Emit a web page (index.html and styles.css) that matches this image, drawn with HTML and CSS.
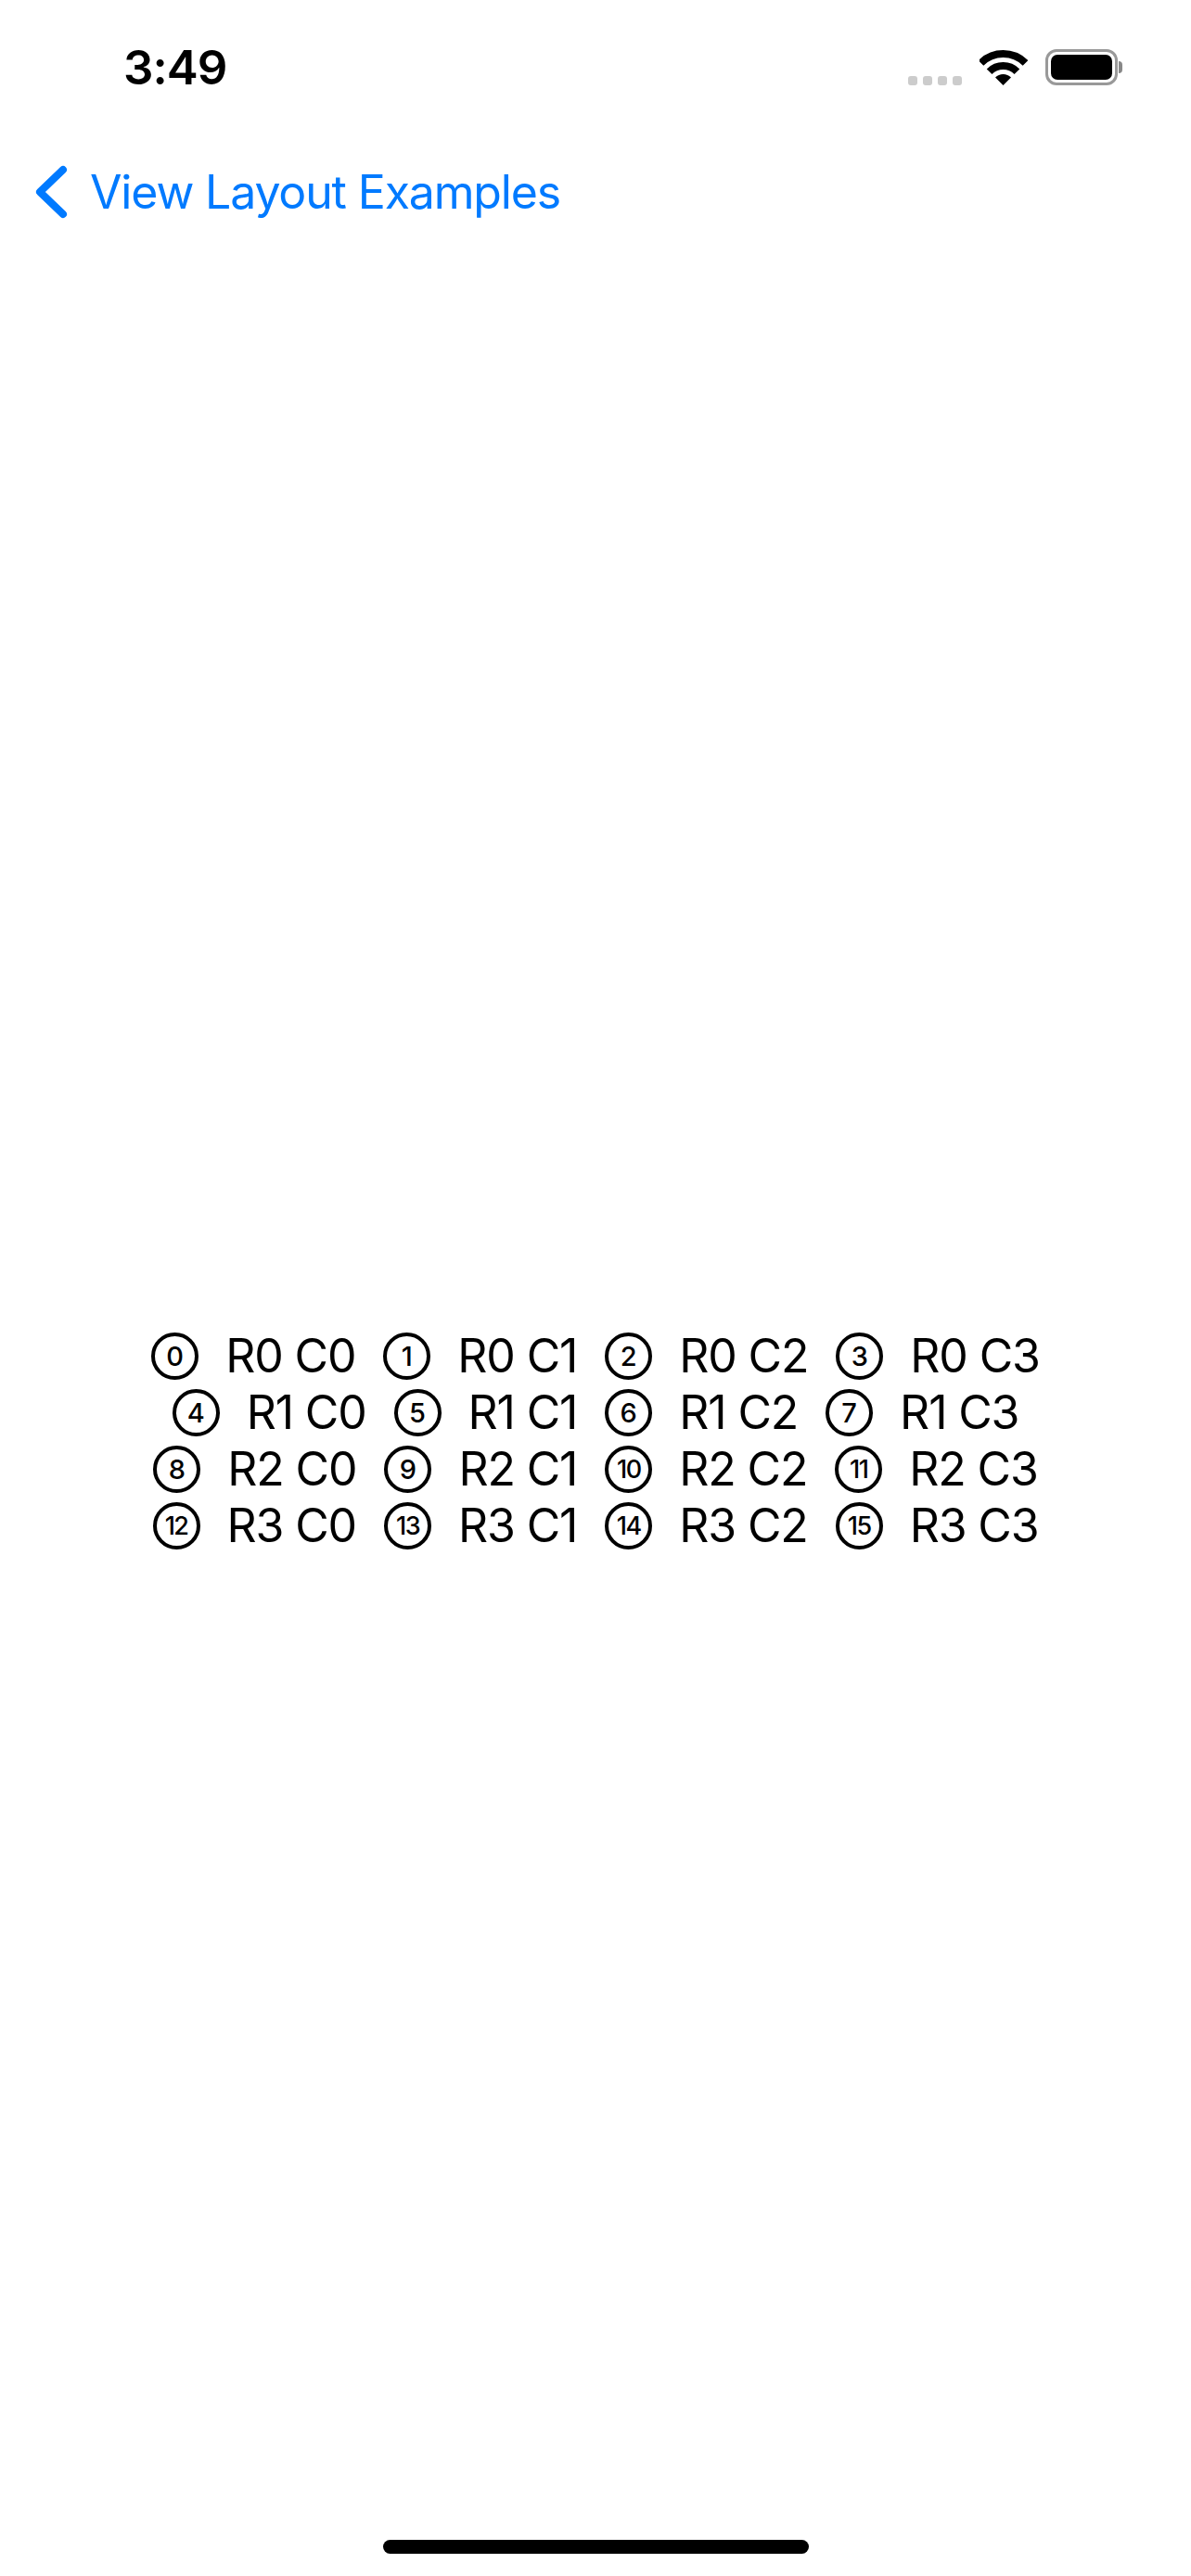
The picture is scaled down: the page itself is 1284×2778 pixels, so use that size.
FILE: index.html
```html
<!DOCTYPE html>
<html lang="en">
<head>
    <meta charset="UTF-8">
    <meta name="viewport" content="width=device-width, initial-scale=1.0">
    <title>Grid Layout</title>
    <link rel="stylesheet" href="styles.css">
</head>
<body>
    <!-- Status bar -->
    <header class="status-bar">
        <span class="time">3:49</span>
        <div class="status-icons">
            <div class="signal-dots"><i></i><i></i><i></i><i></i></div>
            <svg class="wifi" viewBox="0 0 52 38" width="52" height="38">
                <path d="M1.5 14 A34 34 0 0 1 49.5 14" fill="none" stroke="#000" stroke-width="8"/>
                <path d="M10.6 23.2 A21 21 0 0 1 40.4 23.2" fill="none" stroke="#000" stroke-width="8"/>
                <path d="M25.5 38 L17 29.5 A12 12 0 0 1 34 29.5 Z" fill="#000"/>
            </svg>
            <div class="battery"><div class="battery-level"></div></div>
        </div>
    </header>

    <nav class="nav-bar">
        <svg class="chevron" viewBox="0 0 36 60" width="36" height="60">
            <path d="M31 6 L6 30 L31 54" fill="none" stroke="#007aff" stroke-width="8" stroke-linecap="round" stroke-linejoin="round"/>
        </svg>
        <span class="back-label">View Layout Examples</span>
    </nav>

    <main class="grid">
        <div class="row">
            <div class="cell"><span class="num">0</span><span class="label">R0 C0</span></div>
            <div class="cell"><span class="num">1</span><span class="label">R0 C1</span></div>
            <div class="cell"><span class="num">2</span><span class="label">R0 C2</span></div>
            <div class="cell"><span class="num">3</span><span class="label">R0 C3</span></div>
        </div>
        <div class="row">
            <div class="cell"><span class="num">4</span><span class="label">R1 C0</span></div>
            <div class="cell"><span class="num">5</span><span class="label">R1 C1</span></div>
            <div class="cell"><span class="num">6</span><span class="label">R1 C2</span></div>
            <div class="cell"><span class="num">7</span><span class="label">R1 C3</span></div>
        </div>
        <div class="row">
            <div class="cell"><span class="num">8</span><span class="label">R2 C0</span></div>
            <div class="cell"><span class="num">9</span><span class="label">R2 C1</span></div>
            <div class="cell"><span class="num two">10</span><span class="label">R2 C2</span></div>
            <div class="cell"><span class="num two">11</span><span class="label">R2 C3</span></div>
        </div>
        <div class="row">
            <div class="cell"><span class="num two">12</span><span class="label">R3 C0</span></div>
            <div class="cell"><span class="num two">13</span><span class="label">R3 C1</span></div>
            <div class="cell"><span class="num two">14</span><span class="label">R3 C2</span></div>
            <div class="cell"><span class="num two">15</span><span class="label">R3 C3</span></div>
        </div>
    </main>

    <div class="home-bar"></div>
</body>
</html>
```

FILE: styles.css
```css
* {
    box-sizing: border-box;
}
body {
    margin: 0;
    height: 2778px;
    display: flex;
    flex-direction: column;
    background: #fff;
    color: #000;
    font-family: Inter, "Liberation Sans", sans-serif;
    overflow: hidden;
}

/* Status bar */
.status-bar {
    height: 146px;
    padding: 53px 79px 0 133px;
    display: flex;
    justify-content: space-between;
    align-items: flex-start;
}
.time {
    font-size: 51px;
    font-weight: 600;
    line-height: 39px;
    letter-spacing: -1px;
}
.status-icons {
    display: flex;
    align-items: flex-end;
    height: 39px;
}
.signal-dots {
    display: flex;
    gap: 6px;
    margin-right: 19px;
}
.signal-dots i {
    width: 10px;
    height: 10px;
    border-radius: 3px;
    background: #ccc;
}
.wifi {
    display: block;
    margin-right: 19px;
}
.battery {
    position: relative;
    width: 78px;
    height: 39px;
    border: 3px solid #999;
    border-radius: 12px;
    padding: 3px;
}
.battery::after {
    content: "";
    position: absolute;
    top: 10px;
    right: -8px;
    width: 4px;
    height: 13px;
    background: #888;
    border-radius: 0 4px 4px 0;
}
.battery-level {
    height: 100%;
    background: #000;
    border-radius: 7px;
}

/* Back button */
.nav-bar {
    height: 100px;
    padding: 31px 0 0 37px;
    display: flex;
    align-items: flex-start;
    color: #007aff;
}
.chevron {
    display: block;
}
.back-label {
    margin: 0 0 0 24px;
    font-size: 50px;
    line-height: 60px;
    letter-spacing: -1.15px;
}

/* Grid */
.grid {
    flex: 1;
    padding-top: 1186px;
}
.row {
    height: 61px;
    display: flex;
    justify-content: center;
    align-items: center;
    gap: 30px;
}
.cell {
    display: flex;
    align-items: center;
    gap: 29px;
}
.num {
    width: 51px;
    height: 51px;
    display: flex;
    align-items: center;
    justify-content: center;
    border: 4px solid #000;
    border-radius: 50%;
    font-size: 29px;
    font-weight: 500;
    line-height: 1;
}
.num.two {
    letter-spacing: -1.5px;
    font-size: 27px;
}
.label {
    font-size: 50px;
    line-height: 61px;
    letter-spacing: -1.15px;
}

.home-bar {
    position: absolute;
    left: 413px;
    top: 2739px;
    width: 459px;
    height: 15px;
    background: #000;
    border-radius: 8px;
}
```
